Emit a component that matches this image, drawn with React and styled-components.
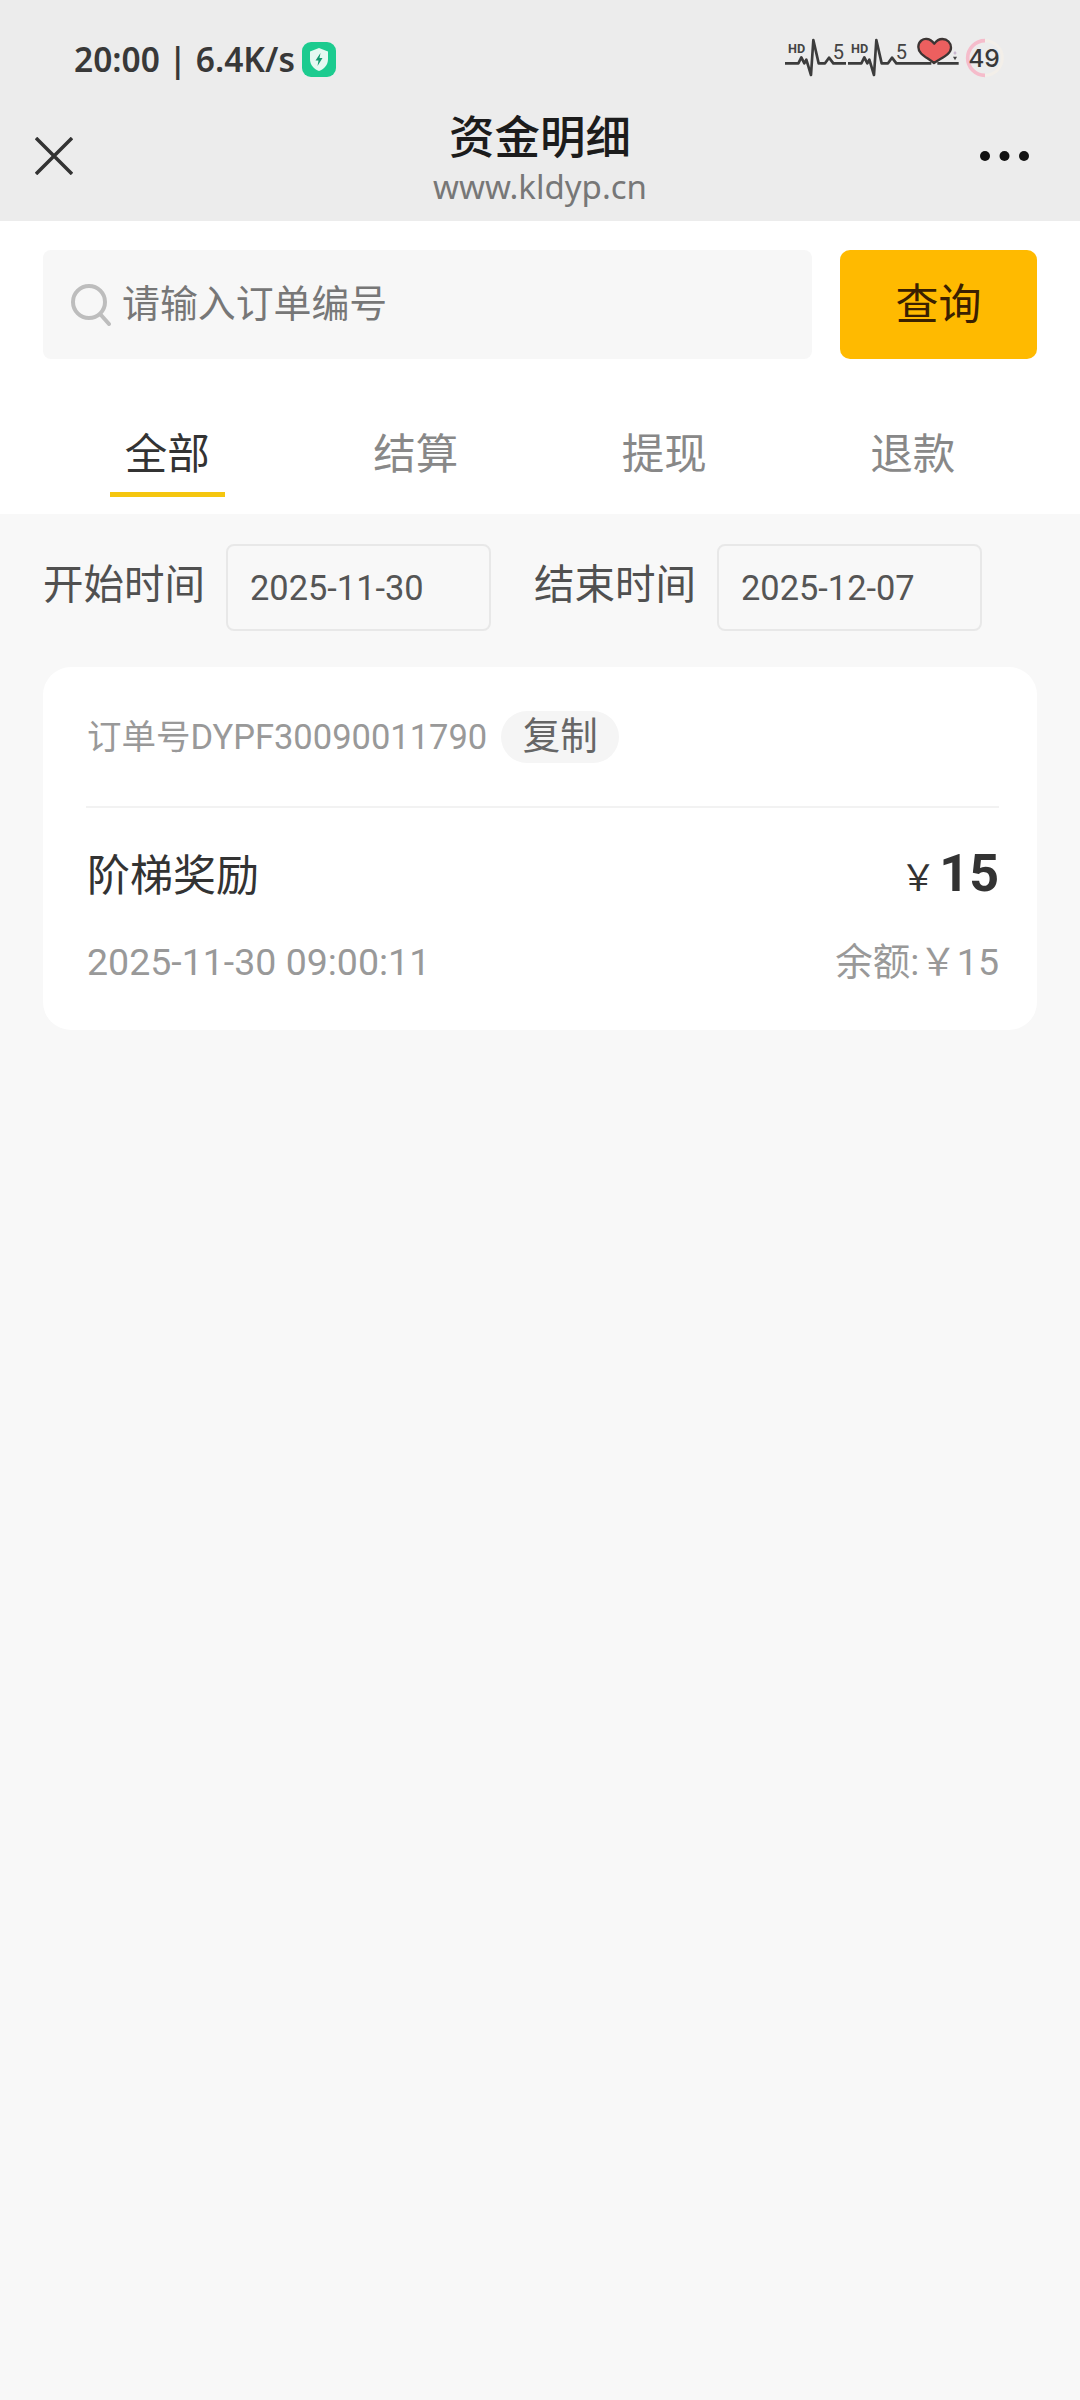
import React from "react"
import styled, { createGlobalStyle } from "styled-components"

const GlobalStyle = createGlobalStyle`
  html, body {
    margin: 0;
    padding: 0;
    background: #f8f8f8;
  }
  body {
    font-family: Roboto, "Noto Sans CJK SC", sans-serif;
  }
  * {
    box-sizing: border-box;
  }
`

const Page = styled.div`
  width: 1080px;
  min-height: 2400px;
  background: #f8f8f8;
`

const Header = styled.header`
  height: 221px;
  background: #ececec;
`

const StatusBar = styled.div`
  height: 112px;
  padding: 6px 60px 0 74px;
  display: flex;
  align-items: center;
  justify-content: space-between;
`

const StatusLeft = styled.div`
  display: flex;
  align-items: center;
  gap: 7px;
`

const Clock = styled.span`
  font-family: "Noto Sans", sans-serif;
  font-size: 33.500px;
  font-weight: 600;
  word-spacing: 0;
  color: #383838;
  white-space: nowrap;
`

const IconStrip = styled.svg`
  display: block;
  margin-bottom: 8px;
`

const NavBar = styled.div`
  display: grid;
  grid-template-columns: 1fr auto 1fr;
  padding: 0 35px 9px;
  align-items: center;
`

const NavIcon = styled.svg`
  display: block;
  margin-bottom: 12px;
  justify-self: ${props => (props.$end ? "end" : "start")};
  margin-right: ${props => (props.$end ? "16px" : "0")};
`

const TitleBlock = styled.div`
  text-align: center;
`

const Title = styled.div`
  font-family: "Noto Sans CJK SC", sans-serif;
  font-size: 45.500px;
  font-weight: 500;
  line-height: 50px;
  color: #1c1c1c;
  margin: -3px 0 3px;
`

const Url = styled.div`
  font-family: "Noto Sans", sans-serif;
  font-size: 33px;
  line-height: 50px;
  color: #777;
`

const TopPanel = styled.section`
  background: #fff;
  height: 293px;
  padding: 29px 43px 0;
`

const SearchRow = styled.div`
  display: flex;
  justify-content: space-between;
  height: 109px;
`

const SearchBox = styled.div`
  width: 769px;
  background: #f7f7f7;
  border-radius: 8px;
  display: flex;
  align-items: center;
  padding-left: 28px;
  gap: 11px;
`

const Placeholder = styled.span`
  font-size: 37.900px;
  color: #777;
  padding-bottom: 8px;
`

const SearchButton = styled.button`
  width: 197px;
  border: 0;
  border-radius: 10px;
  background: #ffba00;
  color: #3a2000;
  font-family: inherit;
  font-size: 43px;
  padding: 0 0 8px;
`

const Tabs = styled.div`
  display: grid;
  grid-template-columns: repeat(4, 1fr);
  margin-top: 71px;
`

const Tab = styled.div`
  justify-self: center;
  width: 115px;
  height: 67px;
  text-align: center;
  font-size: 42.500px;
  line-height: 50px;
  white-space: nowrap;
  color: ${props => (props.$active ? "#333" : "#888")};
  border-bottom: 5px solid ${props => (props.$active ? "#f5c60f" : "transparent")};
`

const DateRow = styled.div`
  display: flex;
  align-items: center;
  padding: 30px 0 0 43px;
`

const DateLabel = styled.span`
  font-size: 40.500px;
  color: #505050;
  margin-right: 21px;
  margin-left: ${props => props.$offset || 0}px;
  padding-bottom: 12px;
  white-space: nowrap;
`

const DateInput = styled.div`
  width: 265px;
  height: 87px;
  border: 2px solid #e8e8e8;
  border-radius: 8px;
  padding-left: 22px;
  display: flex;
  align-items: center;
  font-size: 34.400px;
  color: #555;
`

const Card = styled.article`
  margin: 36px 43px 0;
  height: 363px;
  background: #fff;
  border-radius: 28px;
  padding: 44px 38px 0 44px;
`

const OrderRow = styled.div`
  display: flex;
  align-items: center;
  height: 52px;
`

const OrderNo = styled.span`
  font-size: 34.500px;
  color: #999;
  padding-bottom: 6px;
`

const CopyPill = styled.span`
  margin-left: 14px;
  width: 118px;
  height: 52px;
  border-radius: 26px;
  background: #f5f5f5;
  display: flex;
  align-items: center;
  justify-content: center;
  font-size: 37.500px;
  color: #666;
  padding-bottom: 10px;
`

const Divider = styled.div`
  height: 2px;
  background: #f2f2f2;
  margin: 43px 0 0 -1px;
`

const InfoRow = styled.div`
  display: flex;
  justify-content: space-between;
  align-items: baseline;
  height: ${props => props.$h}px;
  margin-top: ${props => props.$mt}px;
`

const Name = styled.span`
  font-size: 43px;
  color: #333;
`

const Amount = styled.span`
  display: flex;
  align-items: baseline;
  color: #333;
`

const Yen = styled.span`
  font-size: 36px;
  margin-right: 3px;
`

const AmountValue = styled.span`
  font-size: 52px;
  font-weight: 700;
`

const Meta = styled.span`
  font-size: 37.500px;
  color: #999;
`

const ShieldBadge = () => (
  <svg width="34" height="35" viewBox="0 0 34 35">
    <rect width="34" height="35" rx="9" fill="#1ccb8f" />
    <path d="M17 6 L26 9.5 V17 C26 23 22 27 17 29 C12 27 8 23 8 17 V9.5 Z" fill="#e6f9f2" />
    <path d="M18.500 11 L13.500 18.500 H16.500 L15.500 24 L20.500 16 H17.500 Z" fill="#159a70" />
  </svg>
)

const ECG = ({ dx }) => (
  <g transform={`translate(${dx} 0)`}>
    <polyline
      points="45,115 85,115 94,97 103,115 109,104 123,150 130,45 146,115 165,115 177,98 190,115 228,115"
      fill="none"
      stroke="#3c3c3c"
      strokeWidth="8"
      strokeLinejoin="round"
    />
    <text x="54" y="84" fontFamily="Roboto, sans-serif" fontSize="38" fontWeight="700" fill="#444">
      HD
    </text>
    <text x="188" y="102" fontFamily="Roboto, sans-serif" fontSize="60" fill="#444">
      5
    </text>
  </g>
)

const StatusIcons = () => (
  <IconStrip width="250" height="60" viewBox="0 0 750 180">
    <ECG dx={0} />
    <ECG dx={189} />
    <path d="M417 115 H484 M502 115 H566" stroke="#3c3c3c" strokeWidth="8" fill="none" />
    <path
      d="M492 114 C470 96 445 88 445 66 C445 48 460 40 472 42 C482 43 488 50 493 56 C498 49 506 42 517 42 C532 42 543 53 543 68 C543 88 515 98 492 114 Z"
      fill="#ec5f5f"
      stroke="#3c3534"
      strokeWidth="7"
      strokeLinejoin="round"
    />
    <path d="M555 78 L560 84 L555 90 L550 84 Z" fill="#c9b6cf" />
    <path d="M549 95 H561 L555 106 Z" fill="#444" />
    <circle cx="645" cy="99" r="52" fill="none" stroke="#f3efe9" strokeWidth="9" />
    <path d="M645 47 A52 52 0 0 0 645 151" fill="none" stroke="#f5bccb" strokeWidth="11" />
    <text
      x="642"
      y="126"
      textAnchor="middle"
      fontFamily="Inter, sans-serif"
      fontSize="74"
      fontWeight="500"
      fill="#383838"
    >
      49
    </text>
  </IconStrip>
)

const SearchIcon = () => (
  <svg width="40" height="42" viewBox="0 0 40 42" fill="none" stroke="#bdbdbd" strokeWidth="4">
    <circle cx="18" cy="18" r="16" />
    <path d="M30 31 L38 40" strokeLinecap="round" />
  </svg>
)

const App = () => {
  const tabs = ["全部", "结算", "提现", "退款"]

  return (
    <Page>
      <GlobalStyle />
      <Header>
        <StatusBar>
          <StatusLeft>
            <Clock>20:00 | 6.4K/s</Clock>
            <ShieldBadge />
          </StatusLeft>
          <StatusIcons />
        </StatusBar>
        <NavBar>
          <NavIcon width="38" height="38" viewBox="0 0 38 38">
            <path d="M1 1 L37 37 M37 1 L1 37" stroke="#333" strokeWidth="3.500" />
          </NavIcon>
          <TitleBlock>
            <Title>资金明细</Title>
            <Url>www.kldyp.cn</Url>
          </TitleBlock>
          <NavIcon $end width="49" height="10" viewBox="0 0 49 10">
            <circle cx="5" cy="5" r="5" fill="#111" />
            <circle cx="24.500" cy="5" r="5" fill="#111" />
            <circle cx="44" cy="5" r="5" fill="#111" />
          </NavIcon>
        </NavBar>
      </Header>

      <TopPanel>
        <SearchRow>
          <SearchBox>
            <SearchIcon />
            <Placeholder>请输入订单编号</Placeholder>
          </SearchBox>
          <SearchButton>查询</SearchButton>
        </SearchRow>
        <Tabs>
          {tabs.map((tab, index) => (
            <Tab key={tab} $active={index === 0}>
              {tab}
            </Tab>
          ))}
        </Tabs>
      </TopPanel>

      <DateRow>
        <DateLabel>开始时间</DateLabel>
        <DateInput>2025-11-30</DateInput>
        <DateLabel $offset={43}>结束时间</DateLabel>
        <DateInput>2025-12-07</DateInput>
      </DateRow>

      <Card>
        <OrderRow>
          <OrderNo>订单号DYPF30090011790</OrderNo>
          <CopyPill>复制</CopyPill>
        </OrderRow>
        <Divider />
        <InfoRow $h={60} $mt={33}>
          <Name>阶梯奖励</Name>
          <Amount>
            <Yen>￥</Yen>
            <AmountValue>15</AmountValue>
          </Amount>
        </InfoRow>
        <InfoRow $h={50} $mt={30}>
          <Meta>2025-11-30 09:00:11</Meta>
          <Meta>余额:￥15</Meta>
        </InfoRow>
      </Card>
    </Page>
  )
}

export default App
